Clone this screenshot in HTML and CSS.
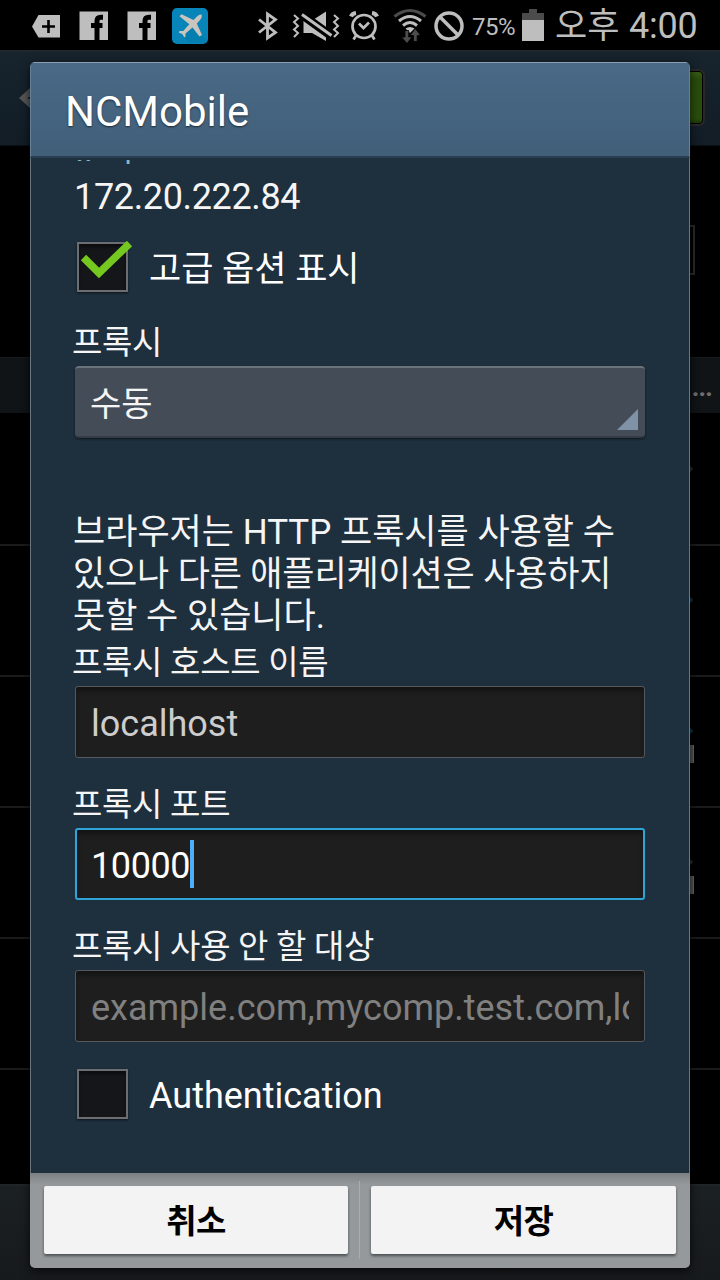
FILE: index.html
```html
<!DOCTYPE html>
<html lang="ko">
<head>
<meta charset="utf-8">
<title>NCMobile</title>
<link rel="stylesheet" href="styles.css">
</head>
<body>
<div class="screen">
  <header class="status">
    <div class="notifications">
      <svg width="28" height="50" viewBox="32 0 28 50"><path fill="#bebebe" d="M38.500 15H60V37.500H38.500L32 26.500Z"/><path stroke="#000" stroke-width="2.600" d="M48.500 20V33M42 26.500H55"/></svg>
      <svg width="29" height="50" viewBox="79 0 29 50"><path fill="#bebebe" d="M79.500 11.500H108V40H79.500Z"/><path fill="none" stroke="#000" stroke-width="5" d="M97 40V21Q97 17.300 101 17.300H103M91 25.500H102.500"/></svg>
      <svg width="29" height="50" viewBox="79 0 29 50"><path fill="#bebebe" d="M79.500 11.500H108V40H79.500Z"/><path fill="none" stroke="#000" stroke-width="5" d="M97 40V21Q97 17.300 101 17.300H103M91 25.500H102.500"/></svg>
      <svg width="36" height="50" viewBox="172 0 36 50"><rect x="172" y="8" width="36" height="36" rx="5" fill="#0785b8"/><path fill="#006e9b" d="M180 14L207 40V43H190L182 36L190 26Z" opacity=".3"/><path fill="#c9c4be" d="M201.500 14.500Q199.500 14 197 16.500L193.500 20L181.500 14.300L179.500 16.200L189.300 24.300L183.300 31L179.500 31L178.800 32.500L182.500 34.200L184.300 37.500L185.500 36.500L185.500 33.500L192.500 27.500L199.500 36.500L202 35L196.800 23.500L200 20Q202.500 17 201.500 14.500Z"/></svg>
    </div>
    <div class="system">
      <svg class="bluetooth" width="22" height="50" viewBox="257 0 22 50"><path fill="none" stroke="#bebebe" stroke-width="2.800" d="M259 19.500L275.500 32.500L267.500 38V14L275.500 19.500L259 32.500"/></svg>
      <svg class="muted" width="48" height="50" viewBox="292 0 48 50"><path fill="#bebebe" d="M303.500 20.500H312L326 11.500V41L312 33H303.500Z"/><path stroke="#000" stroke-width="8.500" d="M301 14L332 36.500"/><path stroke="#bebebe" stroke-width="3" d="M302 14.500L331.500 35.500"/><path fill="none" stroke="#bebebe" stroke-width="2" d="M294 15L298 18.500L294 22L298 26L294 29.500L298 33L294 37M334 15L338 18.500L334 22L338 26L334 29.500L338 33L334 37"/></svg>
      <svg class="alarm" width="30" height="50" viewBox="349 0 30 50"><g fill="none" stroke="#bebebe" stroke-width="2.700"><circle cx="364" cy="26.500" r="11.500"/><path d="M359 23.500L363.500 28L369 22.500M356 35.500L353.500 39.500M372 35.500L374.500 39.500"/><path stroke-width="4" d="M351 16.500Q352 13.500 356 13M377 16.500Q376 13.500 372 13"/></g></svg>
      <svg class="wifi" width="34" height="50" viewBox="393 0 34 50"><g fill="none" stroke="#bebebe" stroke-width="3"><path stroke="#4b4b4b" d="M394.500 16.500Q410 4.500 425.500 16.500"/><path d="M399 21Q410 12 421 21M403 25.500Q410 19.500 417 25.500"/></g><path fill="#bebebe" d="M405.500 28.500Q410 25.500 414.500 28.500L410 33Z"/><path fill="#4b4b4b" stroke="#000" stroke-width=".8" d="M405 30.500H408.700V37H412L407 43.500L401.500 37H405ZM413.500 41.500H417.200V35.500H420.700L415.300 28.500L410 35.500H413.500Z"/></svg>
      <svg class="blocked" width="30" height="50" viewBox="434 0 30 50"><g fill="none" stroke="#bebebe" stroke-width="3.500"><circle cx="449" cy="26" r="13"/><path d="M440 17L458 35"/></g></svg>
      <span class="percent">75%</span>
      <svg class="battery" width="22" height="50" viewBox="522 0 22 50"><path fill="#4b4b4b" d="M529 9H537V13H544V20H522V13H529Z"/><path fill="#bebebe" d="M522 20H544V41H522Z"/></svg>
      <span class="clock"><span class="meridiem">오후</span><span class="time">4:00</span></span>
    </div>
  </header>

  <main class="settings">
    <div class="actionbar">
      <svg width="14" height="24" viewBox="0 0 14 24"><path fill="#555" d="M1 12L13 1V23Z"/><path fill="#222" d="M10 11H14V13H10Z"/></svg>
      <span class="switch"></span>
    </div>
    <div class="option"><span class="box"></span></div>
    <div class="section">...</div>
    <div class="network"><i class="signal"></i></div>
    <div class="network"><i class="signal on"></i></div>
    <div class="network"><i class="signal on"></i><i class="lock"></i></div>
    <div class="network"><i class="signal"></i><i class="lock"></i></div>
    <div class="network"></div>
    <div class="network last"></div>
    <div class="bottombar"></div>
  </main>

  <section class="dialog">
    <h1 class="title">NCMobile</h1>
    <div class="body">
      <div class="clipped"><span>IP 주소</span></div>
      <div class="address">172.20.222.84</div>
      <label class="check advanced">
        <span class="tickbox"><svg class="tick" width="60" height="50" viewBox="0 0 60 50"><path fill="none" stroke="#74c81f" stroke-width="7.500" d="M7.500 16.500L23 32L53.500 2.500"/></svg></span>
        <span class="checktext ko">고급 옵션 표시</span>
      </label>
      <div class="label first">프록시</div>
      <div class="spinner"><span>수동</span><i class="corner"></i></div>
      <p class="note">브라우저는 HTTP 프록시를 사용할 수<br><span class="tight">있으나 다른 애플리케이션은 사용하지</span><br>못할 수 있습니다.</p>
      <div class="label host">프록시 호스트 이름</div>
      <div class="field"><span class="value host-value">localhost</span></div>
      <div class="label">프록시 포트</div>
      <div class="field focused"><span class="value port-value">10000</span><i class="caret"></i></div>
      <div class="label">프록시 사용 안 할 대상</div>
      <div class="field"><span class="value hint">example.com,mycomp.test.com,localhost</span></div>
      <label class="check auth">
        <span class="tickbox"></span>
        <span class="checktext">Authentication</span>
      </label>
    </div>
    <footer class="actions">
      <button class="btn">취소</button>
      <i class="divider"></i>
      <button class="btn save">저장</button>
    </footer>
  </section>
</div>
</body>
</html>
```
FILE: styles.css
```css
* { box-sizing: border-box; }
body { margin: 0; background: #000; font-family: Roboto, "Noto Sans CJK KR", sans-serif; }
svg { display: block; flex: none; }
.screen { position: relative; width: 720px; height: 1280px; overflow: hidden; background: #000; }

.status { display: flex; justify-content: space-between; height: 50px; padding: 0 22px 0 32px; color: #bebebe; }
.notifications { display: flex; gap: 19px; }
.notifications svg:last-child { margin-left: -3px; }
.system { display: flex; align-items: center; width: 441px; }
.muted { margin-left: 13px; }
.alarm { margin-left: 9px; }
.wifi { margin-left: 14px; }
.blocked { margin-left: 7px; }
.percent { width: 51px; margin-left: 8px; margin-right: -1px; font-size: 24px; line-height: 30px; padding-top: 4px; letter-spacing: -0.5px; }
.clock { display: flex; height: 50px; margin-left: 11px; font-size: 36px; line-height: 50px; white-space: nowrap; }
.meridiem { width: 74px; font-size: 35px; line-height: 53px; }
.time { line-height: 52px; letter-spacing: -0.2px; }

.settings { display: flex; flex-direction: column; height: 1230px; }
.actionbar { display: flex; justify-content: space-between; height: 96px; flex: none; padding: 17px 15px 0 18px; background: linear-gradient(#17232d, #121d26); border-top: 2px solid #1f282e; border-bottom: 1px solid #0a0f13; }
.actionbar svg { margin-top: 17px; }
.switch { width: 60px; height: 57px; border: 2px solid #292929; border-radius: 6px; background: linear-gradient(#3c5d16, #294d0c 15%, #294d0c 90%, #1c3509); box-shadow: inset 0 0 0 1px #000; }
.option { display: flex; justify-content: flex-end; height: 211px; flex: none; padding: 79px 25px 0 0; }
.box { width: 50px; height: 50px; border: 2px solid #292929; }
.section { height: 56px; flex: none; padding-right: 8px; background: #101416; border-top: 1px solid #171b1d; color: #707070; font-size: 26px; font-weight: 700; line-height: 59px; text-align: right; letter-spacing: -0.8px; }
.network { display: flex; flex-direction: column; align-items: flex-end; height: 131px; flex: none; padding-top: 51px; border-bottom: 2px solid #1b1b1b; }
.section + .network { height: 133px; padding-top: 53px; }
.network.last { flex: 1; height: auto; border: 0; }
.signal { width: 6px; height: 6px; margin-right: 28px; background: #292929; transform: rotate(45deg); }
.signal.on { background: #113442; }
.lock { width: 14px; height: 18px; margin: 11px 26px 0 0; background: #505050; border-right: 1px solid #666; }
.bottombar { height: 96px; flex: none; background: linear-gradient(#1b2023, #171a1d); border-top: 2px solid #202529; }

.dialog { position: absolute; left: 30px; top: 62px; width: 660px; height: 1206px; display: flex; flex-direction: column; border-radius: 5px; background: #1e2f3d; overflow: hidden; box-shadow: 0 3px 10px rgba(0,0,0,.7); }
.title { margin: 0; height: 96px; flex: none; padding-left: 34px; background: linear-gradient(#496986, #415f79); border: 1px solid #688198; border-top: 1px solid #8da0b1; border-bottom: 2px solid #2a4052; color: #fff; font-size: 42px; font-weight: 400; line-height: 98px; text-shadow: 0 1px 2px rgba(0,0,0,.6); }
.body { flex: 1; overflow: hidden; padding: 0 44px; border: solid #6a7780; border-width: 0 1px; color: #f5f5f5; white-space: nowrap; }
.clipped { height: 17px; margin-top: 2px; overflow: hidden; display: flex; align-items: flex-end; color: #8eb6c1; font-size: 33px; }
.clipped span { line-height: 40px; margin-bottom: 7px; }
.address { height: 40px; margin-left: -1px; font-size: 36px; line-height: 40px; letter-spacing: -0.35px; }
.check { display: flex; gap: 21px; align-items: center; height: 52px; padding-left: 2px; color: #fff; font-size: 36px; }
.advanced { margin-top: 24px; }
.tickbox { position: relative; width: 51px; height: 50px; flex: none; background: #15161a; border: 2px solid #6b6d70; box-shadow: 0 1px 2px rgba(0,0,0,.6), inset 0 3px 3px #0c0d10; }
.tick { position: absolute; left: -3px; top: -3px; }
.checktext { line-height: 50px; padding-top: 4px; }
.checktext.ko { padding-top: 6px; font-size: 35px; }
.label { height: 42px; margin: 28px 0 0 -3px; font-size: 33px; line-height: 38px; letter-spacing: -0.3px; }
.label.first { margin-top: 31px; }
.spinner { display: flex; justify-content: space-between; align-items: flex-end; height: 72px; padding: 0 7px 8px 15px; border-radius: 4px; background: #444d57; border-top: 2px solid #6b737b; border-bottom: 2px solid #343c45; box-shadow: 0 1px 2px #0d151c; font-size: 34px; line-height: 48px; }
.corner { width: 21px; height: 21px; margin-bottom: -2px; background: #8092a5; clip-path: polygon(100% 0, 100% 100%, 0 100%); }
.note { margin: 74px 0 0 -2px; font-size: 35px; line-height: 42px; }
.tight { letter-spacing: -0.15px; }
.label.host { margin-top: 6px; }
.field { display: flex; align-items: center; height: 72px; padding: 0 15px; border: 1px solid #57595c; border-radius: 3px; background: #1e1e1e; box-shadow: inset 0 4px 4px #151515; }
.value { overflow: hidden; font-size: 36px; line-height: 66px; padding-top: 4px; }
.host-value { color: #cdcdcd; }
.port-value { color: #fff; letter-spacing: -0.4px; }
.focused { border: 2px solid #2fa4d7; padding: 0 14px; }
.caret { width: 4px; height: 48px; background: #4daefa; }
.hint { color: #808080; }
.auth { margin-top: 26px; }

.actions { display: flex; justify-content: space-between; height: 95px; flex: none; padding: 13px 14px 14px; background: linear-gradient(#7d8184, #95999c 12px, #95999c); }
.btn { width: 304px; height: 68px; padding: 4px 0 0; border: 0; border-radius: 2px; background: #f3f3f3; box-shadow: 0 2px 3px #4a4e51; color: #000; font: 700 33px/64px Roboto, "Noto Sans CJK KR", sans-serif; letter-spacing: -0.6px; }
.btn.save { width: 305px; }
.divider { width: 1px; height: 78px; margin-top: -5px; background: #a9adb0; }
```
